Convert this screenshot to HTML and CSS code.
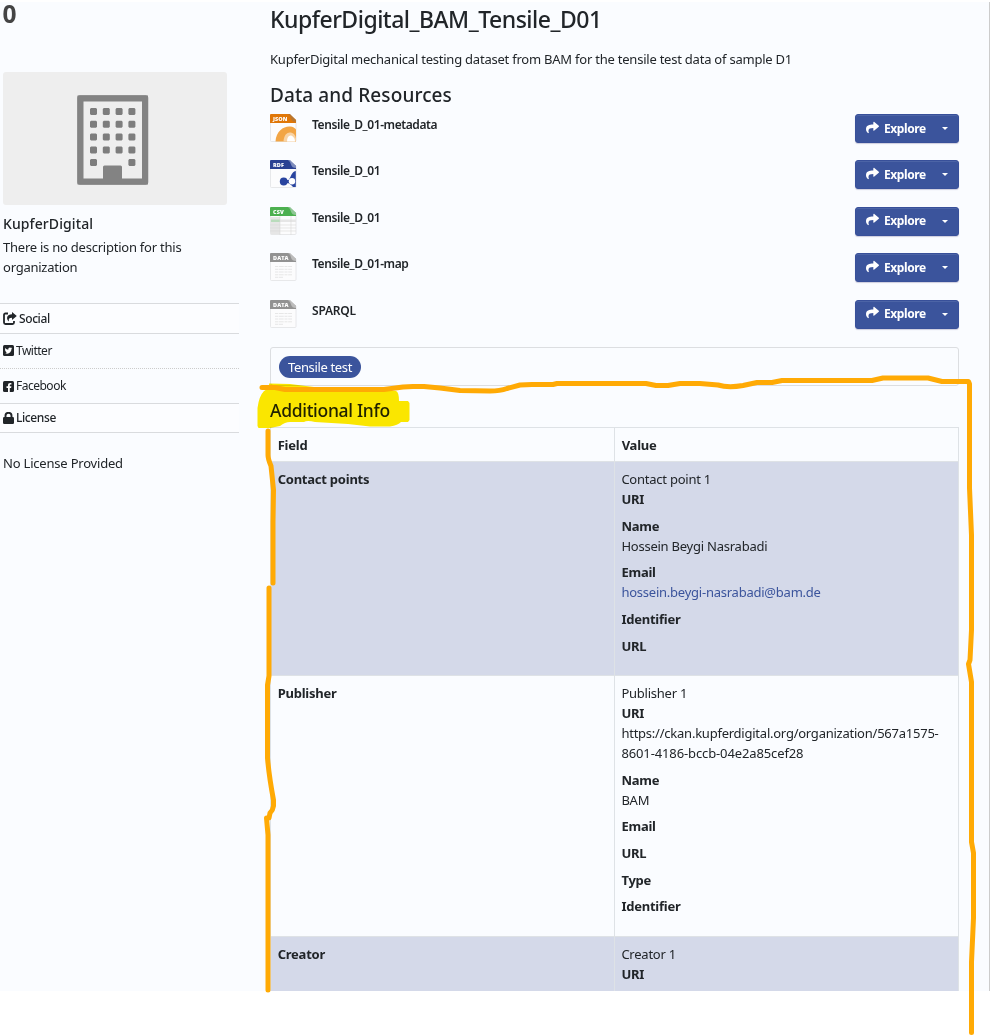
FILE: index.html
```html
<!DOCTYPE html>
<html lang="en">
<head>
<meta charset="utf-8">
<title>KupferDigital_BAM_Tensile_D01</title>
<link rel="stylesheet" href="styles.css">
</head>
<body>
<svg class="defs" width="0" height="0">
  <symbol id="share" viewBox="0 0 512 512"><path fill="currentColor" d="M503.700 189.800L327.700 37.900C312.300 24.500 288 35.300 288 56v80C127.400 137.900 0 170.100 0 322.300c0 61.400 39.600 122.300 83.300 154.100 13.700 9.900 33.100-2.500 28.100-18.600C66.100 312.800 132.900 274.300 288 272v88c0 20.700 24.300 31.500 39.700 18.200l176-152c11.100-9.600 11.100-26.800 0-36.400z"/></symbol>
  <symbol id="file" viewBox="0 0 27 28"><path d="M1 .5H20L26 6V26.500q0 1-1 1H1.500q-1 0-1-1V1Z" fill="#fcfcfd" stroke="#e2e2e5" stroke-width=".8"/></symbol>
</svg>
<div class="page">
  <aside class="side">
    <div class="count">0</div>
    <div class="org-image">
      <svg width="72" height="90" viewBox="0 0 72 90">
        <rect x="3.500" y="3.500" width="64.500" height="83" fill="none" stroke="#838383" stroke-width="6"/>
        <rect x="1" y="1" width="69.500" height="88" rx="2" fill="none" stroke="#838383" stroke-width="1.500"/>
        <path fill="#838383" d="M26 72q0-1.500 1.500-1.500h16q1.500 0 1.500 1.500v15H26Z"/>
        <g fill="#7d7d7d">
          <path id="wrow" d="M14 13h5l1 1v5l-1 1h-5l-1-1v-5ZM26.800 13h5l1 1v5l-1 1h-5l-1-1v-5ZM39.600 13h5l1 1v5l-1 1h-5l-1-1v-5ZM52.400 13h5l1 1v5l-1 1h-5l-1-1v-5Z"/>
          <use href="#wrow" y="12.800"/><use href="#wrow" y="25.600"/><use href="#wrow" y="38.400"/>
          <path d="M14 64h5l1 1v5l-1 1h-5l-1-1v-5ZM52.400 64h5l1 1v5l-1 1h-5l-1-1v-5Z"/>
        </g>
      </svg>
    </div>
    <h1 class="org-name"><span>KupferDigital</span></h1>
    <p class="org-desc">There is no description for this organization</p>
    <h2 class="bar social">
      <svg width="14" height="13" viewBox="0 0 14 13"><path d="M5 1.500H2.500Q1 1.500 1 3v7.500Q1 12 2.500 12H9.500Q11 12 11 10.500V9" fill="none" stroke="currentColor" stroke-width="1.800"/><path fill="currentColor" d="M9 0l4.800 4L9 8V5.700C6.300 5.700 5.200 6.700 6 9.500 2.500 6.500 4 2.300 9 2.200Z"/></svg>
      <span>Social</span></h2>
    <ul class="links">
      <li><svg width="11" height="11" viewBox="0 0 11 11"><rect width="11" height="11" rx="1.500" fill="currentColor"/><path fill="#fff" d="M1.800 8.100c.8.100 1.500-.1 2.100-.5-.7 0-1.100-.4-1.300-1 .2 0 .4 0 .6-.1C2.500 6.300 2 5.800 2 5c.2.100.4.200.6.200C1.900 4.600 1.800 3.800 2.200 3c.8 1 1.900 1.500 3.200 1.600C5.100 3.300 6 2.500 7 2.500c.5 0 .8.200 1.100.5.400-.1.700-.2 1-.4-.1.400-.4.600-.7.900.3 0 .6-.1.900-.2-.2.300-.5.600-.8.800C8.500 7.500 5.200 10 1.800 8.100Z"/></svg><span>Twitter</span></li>
      <li><svg width="11" height="11" viewBox="0 0 11 11"><rect width="11" height="11" rx="1.500" fill="currentColor"/><path fill="#fff" d="M5 11V7H3.500V5.300H5V4.200C5 2.700 5.800 1.900 7.200 1.900c.6 0 1.200.1 1.200.1v1.500h-.7C7 3.500 6.800 3.900 6.800 4.300v1h1.600L8.100 7H6.800v4Z"/></svg><span>Facebook</span></li>
    </ul>
    <h2 class="bar license">
      <svg width="11" height="12" viewBox="0 0 11 12"><rect y="5" width="11" height="7" rx="1.200" fill="currentColor"/><path d="M2.500 6V3.800a3 3 0 0 1 6 0V6" fill="none" stroke="currentColor" stroke-width="1.900"/></svg>
      <span>License</span></h2>
    <p class="no-license">No License Provided</p>
  </aside>
  <main class="main">
    <h1 class="title"><span>KupferDigital_BAM_Tensile_D01</span></h1>
    <p class="notes"><span>KupferDigital mechanical testing dataset from BAM for the tensile test data of sample D1</span></p>
    <h2 class="sub">Data and Resources</h2>
    <ul class="resources">
      <li><svg class="ficon" viewBox="0 0 27 28"><use href="#file"/><path fill="#e07708" d="M0 1q0-1 1-1H19L26 6V9H0Z"/><path fill="#b9762f" d="M18 0H20L26 6V8Q22 8 21 4.500 20.500 1.500 18 0Z"/><path fill="#f2a545" d="M5.500 27.500C6 17 14 12 20 12.500c3 .2 5 1.500 6 3V27.500Z"/><path fill="#f8d3a5" d="M13.500 27.500c.5-7 4-9.500 7-9 3.500.5 5 3 5.500 6v3Z"/><path fill="#fff" d="M17 27.500c0-4 1.500-6 3.500-6s4.500 2.500 4.500 6Z"/><text x="3" y="7" class="ft">JSON</text></svg>
        <span class="rn">Tensile_D_01-metadata</span><a class="btn"><svg width="13" height="13"><use href="#share"/></svg><span>Explore</span><i></i></a></li>
      <li><svg class="ficon" viewBox="0 0 27 28"><use href="#file"/><path fill="#2a4193" d="M0 1q0-1 1-1H19L26 6V9H0Z"/><path fill="#7d8cbd" d="M18 0H20L26 6V8Q22 8 21 4.500 20.500 1.500 18 0Z"/><g fill="#29449f"><circle cx="13.700" cy="21.500" r="3.900"/><path d="M14 20.300l4.500-.4C21 18 21 12 25.800 11V27H23C21.500 25 20 24 18.500 23.200l-4.500-.4Z"/></g><circle cx="22" cy="21.300" r="3.200" fill="#fff"/><text x="3" y="7" class="ft">RDF</text></svg>
        <span class="rn">Tensile_D_01</span><a class="btn"><svg width="13" height="13"><use href="#share"/></svg><span>Explore</span><i></i></a></li>
      <li><svg class="ficon" viewBox="0 0 27 28"><use href="#file"/><path fill="#e6e6e6" d="M.5 10H10V27.500H1.500q-1 0-1-1ZM.5 12.500h25.500v2.500H.5Z"/><path fill="#b9dcbc" d="M1 12.500h9V15H1Z"/><path fill="none" stroke="#d9d9d9" stroke-width=".6" d="M0 18h26M0 21h26M0 24h26M10 9v19M21 9v19"/><path fill="#4cb050" d="M0 1q0-1 1-1H19L26 6V9H0Z"/><path fill="#8fc795" d="M18 0H20L26 6V8Q22 8 21 4.500 20.500 1.500 18 0Z"/><text x="3" y="7" class="ft">CSV</text></svg>
        <span class="rn">Tensile_D_01</span><a class="btn"><svg width="13" height="13"><use href="#share"/></svg><span>Explore</span><i></i></a></li>
      <li><svg class="ficon" viewBox="0 0 27 28"><use href="#file"/><path fill="none" stroke="#e4e4e4" stroke-width=".9" stroke-dasharray="3 .7 5 .8" d="M5 13.500H22M5 16.300H22M5 19H22M5 21.800H22M5 24.300H13"/><path fill="#929292" d="M0 1q0-1 1-1H19L26 6V9H0Z"/><path fill="#bcbcbc" d="M18 0H20L26 6V8Q22 8 21 4.500 20.500 1.500 18 0Z"/><text x="3" y="7" class="ft">DATA</text></svg>
        <span class="rn">Tensile_D_01-map</span><a class="btn"><svg width="13" height="13"><use href="#share"/></svg><span>Explore</span><i></i></a></li>
      <li><svg class="ficon" viewBox="0 0 27 28"><use href="#file"/><path fill="none" stroke="#e4e4e4" stroke-width=".9" stroke-dasharray="3 .7 5 .8" d="M5 13.500H22M5 16.300H22M5 19H22M5 21.800H22M5 24.300H13"/><path fill="#929292" d="M0 1q0-1 1-1H19L26 6V9H0Z"/><path fill="#bcbcbc" d="M18 0H20L26 6V8Q22 8 21 4.500 20.500 1.500 18 0Z"/><text x="3" y="7" class="ft">DATA</text></svg>
        <span class="rn sparql">SPARQL</span><a class="btn"><svg width="13" height="13"><use href="#share"/></svg><span>Explore</span><i></i></a></li>
    </ul>
    <div class="tags"><a class="tag">Tensile test</a></div>
    <h2 class="info">Additional Info</h2>
    <table class="table">
      <tr class="head"><th>Field</th><th>Value</th></tr>
      <tr class="odd"><th>Contact points</th><td>Contact point 1
        <dl><dt>URI</dt><dd></dd><dt>Name</dt><dd>Hossein Beygi Nasrabadi</dd><dt>Email</dt><dd><a class="mail">hossein.beygi-nasrabadi@bam.de</a></dd><dt>Identifier</dt><dd></dd><dt>URL</dt><dd></dd></dl></td></tr>
      <tr><th>Publisher</th><td>Publisher 1
        <dl><dt>URI</dt><dd class="uri">https://ckan.kupferdigital.org/organization/567a1575-<br><span>8601-4186-bccb-04e2a85cef28</span></dd><dt>Name</dt><dd>BAM</dd><dt>Email</dt><dd></dd><dt>URL</dt><dd></dd><dt>Type</dt><dd></dd><dt>Identifier</dt><dd></dd></dl></td></tr>
      <tr class="odd last"><th>Creator</th><td>Creator 1
        <dl><dt>URI</dt><dd></dd></dl></td></tr>
    </table>
  </main>
</div>
<svg class="marks marker" width="991" height="1036" viewBox="0 0 991 1036"><path fill="#ffe900" d="M269 383.500L290 384 314 387 340 390 396 391Q399 392 399 401H408L409.500 403V420L408 422H401Q398 425 390 426.500H370L348 424 315 422Q307 420 304 422H290Q285 422 280 426L270 428H258.500L257.500 426V408Q259 396 264 391L269 388Z"/></svg>
<svg class="marks" width="991" height="1036" viewBox="0 0 991 1036"><g fill="none" stroke="#ffaa05" stroke-width="5" stroke-linecap="round" stroke-linejoin="round">
  <path d="M262 387.500H275L285 389.500H384L403 387 413 386.500H424L440 388 460 390.500 490 391Q500 391 507 388.500L520 385 532 384.500H553L557 383.500H646L656 385.500H668L680 383.500H700L718 385Q728 388 743 385.500L757 382.500H772L782 380.500H872L883 378H928L942 381.500H968.500L969.500 384V488L971.500 535V630L970 660 968.500 664 971.500 682V842L973.500 853V918L971.500 962V1032.500"/>
  <path d="M268 431V455Q268 459 271 466L273.500 490 273 522V583"/>
  <path d="M269 588V676L267.500 685V758Q269 776 273.500 800V806Q273 810 270 813L269 818H266.500L268 835V990"/>
</g></svg>
</body>
</html>
```
FILE: styles.css
```css
* { box-sizing: border-box; }
body { margin: 0; background: #fff; color: #212529; font: 13px/20px "Noto Sans", sans-serif; letter-spacing: -.235px; }
h1, h2, p, ul, dl, dd { margin: 0; padding: 0; }
ul { list-style: none; }
.defs { position: absolute; }
.page { margin-top: 2px; height: 989px; width: 990px; display: flex; background: #fafcff; border-right: 1px solid #ccc; }
.side { width: 239px; flex: none; }
.count { height: 70px; padding-left: 2.500px; font-family: "Open Sans", sans-serif; font-size: 24.500px; line-height: 23px; font-weight: 700; color: #444; letter-spacing: 0; }
.org-image { margin-left: 3px; width: 224px; height: 133px; border-radius: 3px; background: #eee; display: flex; justify-content: center; align-items: center; padding: 3px 4px 0 0; }
.org-name { height: 28px; padding: 9px 0 0 3px; font-size: 14px; line-height: 20px; font-weight: 500; letter-spacing: .1px; }
.org-desc { padding: 4px 30px 0 3px; height: 70px; }
.bar { display: flex; align-items: center; gap: 3px; padding-left: 3px; font-size: 12px; font-weight: 500; letter-spacing: -.4px; border: solid #d9dbde; border-width: 1px 0; background: #fcfdff; }
.social { height: 31px; gap: 2px; }
.license { height: 30px; margin-top: -1px; gap: 2px; }
.links li { display: flex; align-items: center; gap: 2px; height: 35px; padding: 0 0 1px 3px; font-size: 12px; letter-spacing: -.5px; }
.links li:first-child { height: 34px; }
.links li + li { border-top: 1px dotted #ccc; height: 36px; }
.no-license { padding: 20px 0 0 3px; letter-spacing: -.2px; }
.main { width: 689px; margin-left: 31px; }
.title { height: 47px; padding-top: 3px; font-size: 23px; line-height: 29px; font-weight: 500; letter-spacing: -.5px; }
.notes { height: 33px; letter-spacing: -.227px; }
.sub { height: 32px; font-size: 19px; line-height: 26px; font-weight: 500; letter-spacing: .1px; }
.resources { height: 233px; }
.resources li { display: flex; align-items: flex-start; height: 46.490px; }
.ficon { width: 27px; height: 28px; flex: none; }
.ft { font: 800 5.500px "Open Sans", sans-serif; fill: #fff; letter-spacing: .1px; }
.rn { flex: 1; margin: 1px 0 0 15px; font-size: 12px; font-weight: 600; letter-spacing: -.41px; }
.sparql { letter-spacing: -.2px; }
.btn { width: 104px; height: 29px; padding: 0 10px; display: flex; align-items: center; border-radius: 3px; background: #3b549c; color: #fff; font-size: 12px; font-weight: 700; letter-spacing: -.4px; box-shadow: inset 0 1px 0 #4c64a6, 0 1px 1px #ccd; border: 1px solid #38509a; }
.btn span { margin-left: 5px; }
.btn svg { margin-top: -3px; }
.btn i { margin-left: auto; border: 3px solid transparent; border-top-color: #fff; border-bottom: 0; }
.tags { height: 39px; border: 1px solid #dcdee1; border-radius: 3px; padding: 8px; }
.tag { display: block; width: 82px; height: 22px; border-radius: 11px; background: #3b549c; color: #fff; text-align: center; line-height: 22px; letter-spacing: -.35px; }
.info { height: 41px; padding-top: 11px; font-size: 17.500px; line-height: 26px; font-weight: 500; letter-spacing: -.3px; }
.table { width: 689px; table-layout: fixed; border-collapse: collapse; }
.table th, .table td { width: 50%; border: 1px solid #dee2e6; padding: 6.670px; text-align: left; vertical-align: top; font-weight: 400; }
.table th, dt { font-weight: 700; }
.odd { background: #d4d9e9; }
dl { margin-bottom: 13.330px; }
.table td { padding: 6.670px 6.670px 0 6.400px; }
dd { margin-bottom: 6.670px; }
dd:last-child { padding-bottom: 6.500px; margin-bottom: 0; }
.uri span { letter-spacing: -.12px; }
.last dl, .last dd:last-child { margin: 0; padding: 0; }
.table .last th, .table .last td { border-bottom: 0; height: 54.800px; }
.mail { color: #3b549c; }
.marks { position: absolute; left: 0; top: 0; }
.marker { mix-blend-mode: multiply; }
```
